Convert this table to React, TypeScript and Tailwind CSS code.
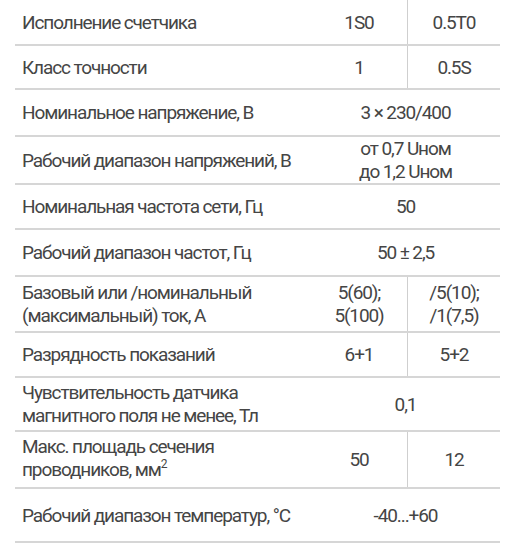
const font = { fontFamily: "Roboto, 'Liberation Sans', sans-serif" };

type Row = {
  label: React.ReactNode;
  a: React.ReactNode;
  b?: React.ReactNode;
  h: string;
};

const rows: Row[] = [
  { label: "Исполнение счетчика", a: "1S0", b: "0.5T0", h: "h-[46px]" },
  { label: "Класс точности", a: "1", b: "0.5S", h: "h-[44px]" },
  { label: "Номинальное напряжение, В", a: "3 × 230/400", h: "h-[47px]" },
  {
    label: "Рабочий диапазон напряжений, В",
    a: (
      <>
        от 0,7 Uном
        <br />
        до 1,2 Uном
      </>
    ),
    h: "h-[48px]",
  },
  { label: "Номинальная частота сети, Гц", a: "50", h: "h-[45px]" },
  { label: "Рабочий диапазон частот, Гц", a: "50 ± 2,5", h: "h-[47px]" },
  {
    label: (
      <>
        Базовый или /номинальный
        <br />
        (максимальный) ток, А
      </>
    ),
    a: (
      <>
        5(60);
        <br />
        5(100)
      </>
    ),
    b: (
      <>
        /5(10);
        <br />
        /1(7,5)
      </>
    ),
    h: "h-[56px]",
  },
  { label: "Разрядность показаний", a: "6+1", b: "5+2", h: "h-[45px]" },
  {
    label: (
      <>
        Чувствительность датчика
        <br />
        магнитного поля не менее, Тл
      </>
    ),
    a: "0,1",
    h: "h-[54px]",
  },
  {
    label: (
      <>
        Макс. площадь сечения
        <br />
        проводников, мм
        <span className="relative -top-[8px] text-[12px]">2</span>
      </>
    ),
    a: "50",
    b: "12",
    h: "h-[57px]",
  },
  { label: "Рабочий диапазон температур, °C", a: "-40...+60", h: "h-[54px]" },
];

export default function App() {
  return (
    <div className="h-[548px] w-[510px] bg-white" style={font}>
      <div className="ml-[15px] w-[485px] text-[19px] leading-[23px] tracking-[-1.1px] text-[#454545]">
        {rows.map((r, i) => (
          <div
            key={i}
            className={`grid grid-cols-[296px_96px_93px] border-b-2 border-[#d6d6d6] ${r.h}`}
          >
            <div className="flex items-center pl-[7px]">
              <div>{r.label}</div>
            </div>
            {r.b === undefined ? (
              <div className="col-span-2 flex items-center justify-center text-center">
                <div>{r.a}</div>
              </div>
            ) : (
              <>
                <div className="flex items-center justify-center text-center">
                  <div>{r.a}</div>
                </div>
                <div className="flex items-center justify-center border-l border-[#cfcfcf] text-center">
                  <div>{r.b}</div>
                </div>
              </>
            )}
          </div>
        ))}
      </div>
    </div>
  );
}
